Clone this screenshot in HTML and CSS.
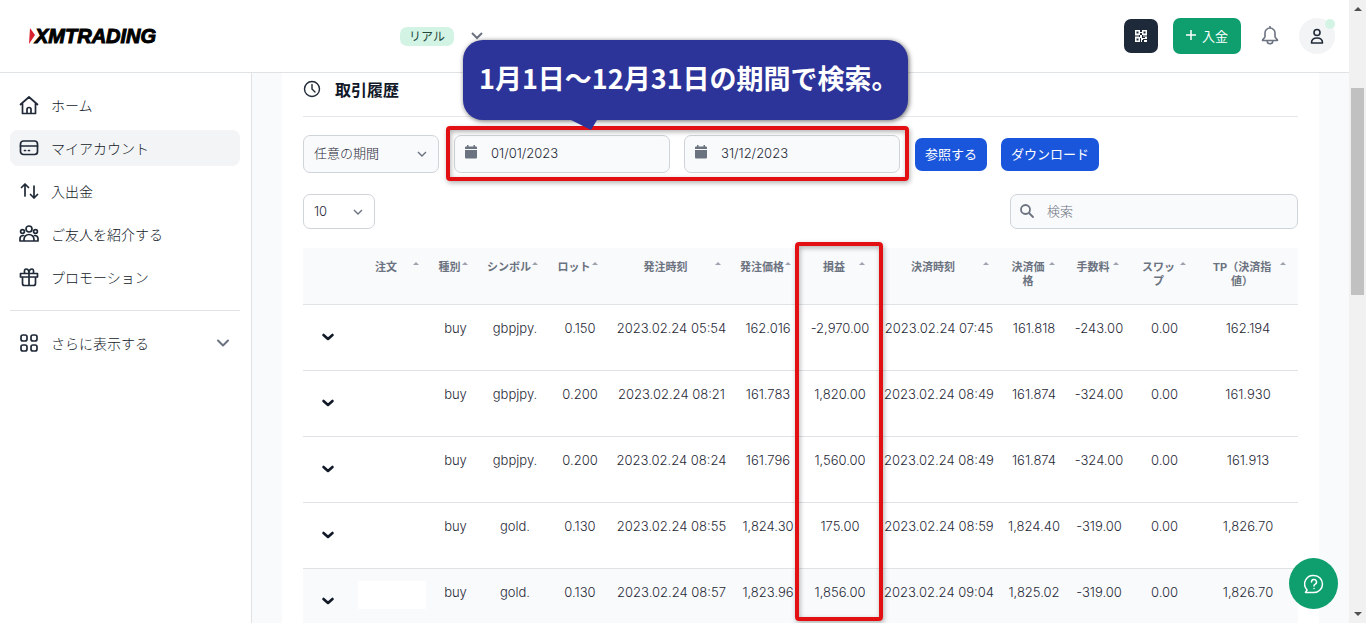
FILE: index.html
```
<!DOCTYPE html>
<html lang="ja">
<head>
<meta charset="utf-8">
<title>取引履歴</title>
<link rel="stylesheet" href="styles.css">
</head>
<body>
<div class="app">
  <header class="topbar">
    <a class="logo" href="#">
      <svg class="logo-mark" viewBox="0 0 6 16"><path d="M1 0 6 7 0 16Z"/></svg><span class="logo-text">XMTRADING</span>
    </a>
    <div class="account">
      <span class="badge">リアル</span>
      <button class="icon-button" aria-label="口座を選択"><svg class="icon-14" viewBox="0 0 14 14" fill="none" stroke="#6b7280" stroke-width="2"><path d="M2 4l5 5 5-5"/></svg></button>
    </div>
    <div class="actions">
      <button class="qr-button" aria-label="QRコード">
        <svg class="icon-14" viewBox="0 0 14 14" fill="#fff"><path fill-rule="evenodd" d="M1 1h5v5H1zM2.500 2.500v2h2v-2zM8 1h5v5H8zM9.500 2.500v2h2v-2zM1 8h5v5H1zM2.500 9.500v2h2v-2z"/><path d="M6 3h2v1H6zM6 6h2v3h3v1H9v1H8v2H7V9H6zM1 6.500h4v1H1zM9 6.500h4v1H9zM11 8h2v2h-2zM10 11h3v2h-3z"/></svg>
      </button>
      <button class="deposit-button"><svg class="icon-10" viewBox="0 0 10 10" stroke="#fff" stroke-width="1.500"><path d="M5 0v10M0 5h10"/></svg>入金</button>
      <button class="icon-button" aria-label="通知"><svg class="icon-20" viewBox="0 0 20 20" fill="none" stroke="#6b7280" stroke-width="1.600" stroke-linecap="round" stroke-linejoin="round"><path d="M10 .500v1.500M10 2a5 5 0 0 0-5 5v3.500c0 1.600-2.500 2.600-2.500 4h15c0-1.400-2.500-2.400-2.500-4V7a5 5 0 0 0-5-5ZM7.200 15a2.800 2.800 0 0 0 5.600 0"/></svg></button>
      <button class="avatar" aria-label="プロフィール"><svg class="icon-16" viewBox="0 0 16 16" fill="none" stroke="#1f2937" stroke-width="1.600" stroke-linejoin="round"><circle cx="8" cy="4.500" r="3"/><path d="M2.500 15c0-3.300 2.200-5 5.500-5s5.500 1.700 5.500 5Z"/></svg><span class="status-dot"></span></button>
    </div>
  </header>
  <div class="body">
    <nav class="sidebar">
      <a class="nav-item" href="#"><svg class="icon-20" viewBox="0 0 20 20"><path d="M1.500 9.500 10 2l8.500 7.500M3.500 8.500V18.500h13V8.500M8 18.500v-4a2 2 0 0 1 4 0v4"/></svg>ホーム</a>
      <a class="nav-item active" href="#"><svg class="icon-20" viewBox="0 0 20 20"><rect x="1.500" y="3" width="17" height="13.500" rx="3"/><path d="M1.500 8h17M5.500 12.500h1M9.500 12.500h1"/></svg>マイアカウント</a>
      <a class="nav-item" href="#"><svg class="icon-20" viewBox="0 0 20 20"><path d="M6 15V3M2.500 6.500 6 3l3.500 3.500M15 5v12M11.500 13.500 15 17l3.500-3.500"/></svg>入出金</a>
      <a class="nav-item" href="#"><svg class="icon-20" viewBox="0 0 20 20"><circle cx="10" cy="5" r="3"/><circle cx="3.500" cy="7.500" r="1.900"/><circle cx="16.500" cy="7.500" r="1.900"/><path d="M5 17v-1.500a5 5 0 0 1 10 0V17ZM5 17H1v-2.500c0-2 1.500-3 3.500-3M15 17h4v-2.500c0-2-1.500-3-3.500-3"/></svg>ご友人を紹介する</a>
      <a class="nav-item" href="#"><svg class="icon-20" viewBox="0 0 20 20"><path d="M1.500 6.500h17V10h-17ZM3.500 10v6.500a2 2 0 0 0 2 2h9a2 2 0 0 0 2-2V10M10 6.500v12M10 6.500H6.500C5 6.500 5 2 7 2s3 2 3 4.500ZM10 6.500h3.500c1.500 0 1.500-4.500-.500-4.500s-3 2-3 4.500Z"/></svg>プロモーション</a>
      <hr class="nav-divider">
      <button class="nav-item nav-more"><svg class="icon-20" viewBox="0 0 20 20"><rect x="2" y="2" width="6" height="6" rx="2"/><rect x="12" y="2" width="6" height="6" rx="2"/><rect x="2" y="12" width="6" height="6" rx="2"/><rect x="12" y="12" width="6" height="6" rx="2"/></svg><span class="nav-label">さらに表示する</span><svg class="icon-14 nav-chevron" viewBox="0 0 14 14"><path d="M2 4.500l5 5 5-5"/></svg></button>
    </nav>
    <main class="content">
      <section class="card">
        <h2 class="card-title"><svg class="icon-18" viewBox="0 0 18 18" fill="none" stroke="#1f2937" stroke-width="1.400" stroke-linecap="round"><circle cx="9" cy="9" r="7.500"/><path d="M9 4.500V9l3 3"/></svg>取引履歴</h2>
        <div class="filters">
          <div class="select-box period">
            <select class="field tinted" aria-label="期間"><option>任意の期間</option></select>
            <svg class="select-arrow" viewBox="0 0 12 12"><path d="M2 4l4 4 4-4"/></svg>
          </div>
          <div class="date-range">
            <div class="input-box">
              <svg class="input-icon" viewBox="0 0 14 14" fill="#6b7280"><path d="M3 0h1.500v1.500h5V0H11v1.500h1q1 0 1 1V4H1V2.500q0-1 1-1h1ZM1 5h12v7.500q0 1-1 1H2q-1 0-1-1Z"/></svg>
              <input class="field tinted with-icon" type="text" value="01/01/2023" aria-label="開始日">
            </div>
            <div class="input-box">
              <svg class="input-icon" viewBox="0 0 14 14" fill="#6b7280"><path d="M3 0h1.500v1.500h5V0H11v1.500h1q1 0 1 1V4H1V2.500q0-1 1-1h1ZM1 5h12v7.500q0 1-1 1H2q-1 0-1-1Z"/></svg>
              <input class="field tinted with-icon" type="text" value="31/12/2023" aria-label="終了日">
            </div>
            <div class="callout">1月1日～12月31日の期間で検索。<svg class="callout-tail" viewBox="0 0 26 10"><path d="M0 0h26l-6 10Z"/></svg></div>
          </div>
          <div class="filter-buttons">
            <button class="primary">参照する</button>
            <button class="primary">ダウンロード</button>
          </div>
        </div>
        <div class="table-tools">
          <div class="select-box page-size">
            <select class="field" aria-label="表示件数"><option>10</option></select>
            <svg class="select-arrow" viewBox="0 0 12 12"><path d="M2 4l4 4 4-4"/></svg>
          </div>
          <div class="input-box search">
            <svg class="input-icon" viewBox="0 0 14 14" fill="none" stroke="#6b7280" stroke-width="1.800" stroke-linecap="round"><circle cx="5.500" cy="5.500" r="4.500"/><path d="M9 9l4 4"/></svg>
            <input class="field tinted with-icon" type="search" placeholder="検索" aria-label="検索">
          </div>
        </div>
        <table class="history">
          <colgroup><col class="c-toggle"><col class="c-order"><col class="c-type"><col class="c-symbol"><col class="c-lot"><col class="c-open-time"><col class="c-open-price"><col class="c-profit"><col class="c-close-time"><col class="c-close-price"><col class="c-fee"><col class="c-swap"><col class="c-tp"></colgroup>
          <thead>
            <tr><th class="plain"></th><th>注文</th><th>種別</th><th>シンボル</th><th>ロット</th><th>発注時刻</th><th>発注価格</th><th><span class="highlight"></span>損益</th><th>決済時刻</th><th>決済価格</th><th>手数料</th><th>スワップ</th><th>TP（決済指値）</th></tr>
          </thead>
          <tbody>
            <tr><td class="toggle"><button class="icon-button" aria-label="詳細"><svg class="icon-14" viewBox="0 0 14 14"><path d="M2.500 5 7 9l4.500-4"/></svg></button></td><td></td><td>buy</td><td>gbpjpy.</td><td>0.150</td><td>2023.02.24 05:54</td><td>162.016</td><td>-2,970.00</td><td>2023.02.24 07:45</td><td>161.818</td><td>-243.00</td><td>0.00</td><td>162.194</td></tr>
            <tr><td class="toggle"><button class="icon-button" aria-label="詳細"><svg class="icon-14" viewBox="0 0 14 14"><path d="M2.500 5 7 9l4.500-4"/></svg></button></td><td></td><td>buy</td><td>gbpjpy.</td><td>0.200</td><td>2023.02.24 08:21</td><td>161.783</td><td>1,820.00</td><td>2023.02.24 08:49</td><td>161.874</td><td>-324.00</td><td>0.00</td><td>161.930</td></tr>
            <tr><td class="toggle"><button class="icon-button" aria-label="詳細"><svg class="icon-14" viewBox="0 0 14 14"><path d="M2.500 5 7 9l4.500-4"/></svg></button></td><td></td><td>buy</td><td>gbpjpy.</td><td>0.200</td><td>2023.02.24 08:24</td><td>161.796</td><td>1,560.00</td><td>2023.02.24 08:49</td><td>161.874</td><td>-324.00</td><td>0.00</td><td>161.913</td></tr>
            <tr><td class="toggle"><button class="icon-button" aria-label="詳細"><svg class="icon-14" viewBox="0 0 14 14"><path d="M2.500 5 7 9l4.500-4"/></svg></button></td><td></td><td>buy</td><td>gold.</td><td>0.130</td><td>2023.02.24 08:55</td><td>1,824.30</td><td>175.00</td><td>2023.02.24 08:59</td><td>1,824.40</td><td>-319.00</td><td>0.00</td><td>1,826.70</td></tr>
            <tr class="hovered"><td class="toggle"><button class="icon-button" aria-label="詳細"><svg class="icon-14" viewBox="0 0 14 14"><path d="M2.500 5 7 9l4.500-4"/></svg></button></td><td class="masked"><div class="mask"></div></td><td>buy</td><td>gold.</td><td>0.130</td><td>2023.02.24 08:57</td><td>1,823.96</td><td>1,856.00</td><td>2023.02.24 09:04</td><td>1,825.02</td><td>-319.00</td><td>0.00</td><td>1,826.70</td></tr>
          </tbody>
        </table>
      </section>
    </main>
  </div>
  <button class="help" aria-label="ヘルプ"><svg class="icon-20" viewBox="0 0 20 20" fill="none" stroke="#fff" stroke-width="1.500" stroke-linecap="round" stroke-linejoin="round"><path d="M10 1.500a8.500 8.500 0 1 1 0 17H1.500l1.600-2.600A8.500 8.500 0 0 1 10 1.500Z"/><path d="M7.500 8a2.500 2.500 0 1 1 3.700 2.200c-.800.400-1.200.900-1.200 1.800M10 14.500v.100"/></svg></button>
</div>
<div class="scrollbar">
  <svg class="scroll-arrow" viewBox="0 0 8 4"><path d="M0 4 4 0l4 4Z"/></svg>
  <div class="scroll-track"><div class="scroll-thumb"></div></div>
  <svg class="scroll-arrow" viewBox="0 0 8 4"><path d="M0 0h8L4 4Z"/></svg>
</div>
</body>
</html>
```
FILE: styles.css
```
* {
  box-sizing: border-box;
}

body {
  margin: 0;
  height: 100vh;
  display: flex;
  overflow: hidden;
  background: #fff;
  color: #1f2937;
  font-family: Inter, "Noto Sans CJK JP", sans-serif;
  font-size: 13px;
  font-weight: 300;
}

button,
input,
select {
  font: inherit;
  color: inherit;
}

button {
  border: 0;
  padding: 0;
  background: none;
  cursor: pointer;
}

svg {
  display: block;
  flex: none;
}

.icon-10 { width: 10px; height: 10px; }
.icon-14 { width: 14px; height: 14px; }
.icon-16 { width: 16px; height: 16px; }
.icon-18 { width: 18px; height: 18px; }
.icon-20 { width: 20px; height: 20px; }

.app {
  position: relative;
  flex: 1;
  min-width: 0;
  display: flex;
  flex-direction: column;
}

/* Top bar */
.topbar {
  flex: none;
  display: flex;
  align-items: center;
  height: 73px;
  padding: 0 14px 0 29px;
  border-bottom: 1px solid #e0e3e6;
}

.logo {
  display: flex;
  align-items: center;
  width: 371px;
  color: #000;
  text-decoration: none;
}

.logo-mark {
  width: 6px;
  height: 16px;
  fill: #d8232f;
}

.logo-text {
  font: italic bold 20px/24px "Liberation Sans", Arial, sans-serif;
  -webkit-text-stroke: 1px #000;
}

.account {
  display: flex;
  align-items: center;
  gap: 16px;
}

.badge {
  padding: 0 9px;
  border-radius: 7px;
  background: #d3f4e5;
  font-size: 12px;
  font-weight: 400;
  line-height: 19px;
  color: #24483c;
}

.actions {
  display: flex;
  align-items: center;
  gap: 19px;
  margin-left: auto;
}

.qr-button,
.deposit-button {
  display: flex;
  align-items: center;
  justify-content: center;
  border-radius: 7px;
}

.qr-button {
  width: 34px;
  height: 34px;
  margin-right: -4px;
  background: #1e2939;
}

.deposit-button {
  gap: 6px;
  width: 68px;
  height: 36px;
  padding-bottom: 2px;
  background: #0f9f6e;
  font-weight: 400;
  color: #fff;
}

.avatar {
  position: relative;
  display: flex;
  align-items: center;
  justify-content: center;
  width: 36px;
  height: 36px;
  border-radius: 50%;
  background: #f3f4f6;
}

.status-dot {
  position: absolute;
  top: 1px;
  right: 0;
  width: 10px;
  height: 10px;
  border-radius: 50%;
  background: #d3f4e5;
}

/* Sidebar */
.body {
  flex: 1;
  min-height: 0;
  display: flex;
}

.sidebar {
  flex: none;
  display: flex;
  flex-direction: column;
  gap: 7px;
  width: 252px;
  padding: 14px 11px 0 10px;
  border-right: 1px solid #e0e3e6;
}

.nav-item {
  display: flex;
  align-items: center;
  gap: 12px;
  height: 36px;
  padding: 0 10px 0 9px;
  border-radius: 8px;
  font-size: 14px;
  color: #111827;
  text-decoration: none;
}

.nav-item svg {
  fill: none;
  stroke: #1f2937;
  stroke-width: 1.7;
  stroke-linecap: round;
  stroke-linejoin: round;
}

.nav-item.active {
  background: #f3f4f6;
}

.nav-divider {
  width: 100%;
  margin: 8px 0 7px;
  border: 0;
  border-top: 1px solid #e0e3e6;
}

.nav-label {
  flex: 1;
  text-align: left;
}

.nav-item .nav-chevron {
  stroke: #6b7280;
  stroke-width: 2;
}

/* Card */
.content {
  flex: 1;
  min-width: 0;
  padding: 0 30px;
  background: #f9fafb;
}

.card {
  height: 100%;
  padding: 0 21px;
  background: #fff;
}

.card-title {
  display: flex;
  align-items: center;
  gap: 14px;
  height: 44px;
  margin: 0 0 18px;
  padding-bottom: 12px;
  border-bottom: 1px solid #e5e7eb;
  font-size: 16px;
  font-weight: 700;
  color: #111827;
}

.filters {
  display: flex;
  align-items: center;
  gap: 15px;
}

.date-range {
  position: relative;
  display: flex;
  gap: 14px;
}

.date-range .input-box {
  width: 216px;
}

.date-range::after {
  content: "";
  position: absolute;
  inset: -9px -9px -8px -8px;
}

.date-range::after,
.highlight {
  border: 4px solid #e20f13;
  border-radius: 4px;
  box-shadow: 1px 2px 5px rgba(0, 0, 0, 0.3), inset 1px 2px 5px rgba(0, 0, 0, 0.3);
  pointer-events: none;
}

.filter-buttons {
  display: flex;
  gap: 14px;
}

.primary {
  height: 33px;
  padding: 0 10px 2px;
  border-radius: 7px;
  background: #1a56db;
  font-weight: 400;
  color: #fff;
}

.select-box,
.input-box {
  position: relative;
}

.period {
  width: 136px;
}

.page-size {
  width: 72px;
}

.field {
  display: block;
  width: 100%;
  height: 38px;
  margin: 0;
  padding: 0 10px 2px;
  border: 1px solid #cfd4da;
  border-radius: 7px;
  outline: 0;
  background: #fff;
  appearance: none;
}

.tinted {
  background: #f9fafb;
}

.with-icon {
  padding-left: 36px;
}

.field::placeholder {
  color: #6b7280;
  opacity: 1;
}

.input-icon {
  position: absolute;
  top: 10px;
  left: 10px;
  width: 14px;
  height: 14px;
}

.select-arrow {
  position: absolute;
  top: 50%;
  right: 11px;
  width: 12px;
  height: 12px;
  margin-top: -6px;
  fill: none;
  stroke: #6b7280;
  stroke-width: 1.4;
  pointer-events: none;
}

.callout {
  position: absolute;
  z-index: 2;
  bottom: 53px;
  left: 9px;
  padding: 0 9px 4px 16px;
  border-radius: 20px;
  background: #2d3499;
  box-shadow: 1px 1px 5px rgba(0, 0, 0, 0.6);
  font-family: "Noto Sans CJK JP", sans-serif;
  font-size: 27px;
  font-weight: 700;
  line-height: 76px;
  color: #fff;
  white-space: nowrap;
}

.callout-tail {
  position: absolute;
  top: 100%;
  left: 108px;
  width: 26px;
  height: 10px;
  fill: #2d3499;
}

.table-tools {
  display: flex;
  justify-content: space-between;
  margin: 21px 0 19px;
}

.table-tools .field {
  height: 35px;
}

.search {
  width: 288px;
}

/* Table */
.history {
  width: 100%;
  table-layout: fixed;
  border-collapse: collapse;
  text-align: center;
}

.c-toggle { width: 50px; }
.c-order { width: 78px; }
.c-type { width: 49px; }
.c-symbol { width: 70px; }
.c-lot { width: 60px; }
.c-open-time { width: 123px; }
.c-open-price { width: 70px; }
.c-profit { width: 74px; }
.c-close-time { width: 124px; }
.c-close-price { width: 66px; }
.c-fee { width: 64px; }
.c-swap { width: 67px; }
.c-tp { width: 100px; }

.history th {
  position: relative;
  height: 56px;
  padding: 12px 18px 0 6px;
  background: #f9fafb;
  vertical-align: top;
  font-size: 11px;
  font-weight: 700;
  line-height: 14px;
  color: #6b7280;
}

.history th:nth-child(-n+9) {
  white-space: nowrap;
}

.history th:nth-child(-n+8) {
  padding: 12px 12px 0 0;
}

.history th:last-child {
  padding: 12px 24px 0 12px;
}

.history th:not(.plain)::after {
  content: "";
  position: absolute;
  top: 14px;
  right: 12px;
  border: 3px solid transparent;
  border-top: 0;
  border-bottom-color: #9ca3af;
}

.highlight {
  position: absolute;
  z-index: 1;
  top: -6px;
  left: -8px;
  right: -6px;
  height: 379px;
}

.history td {
  height: 66px;
  padding: 14px 0 0;
  border-top: 1px solid #e0e3e6;
  vertical-align: top;
  line-height: 18px;
  white-space: nowrap;
}

.history .toggle {
  padding: 3px 0 0;
  vertical-align: middle;
}

.toggle svg {
  fill: none;
  stroke: #111827;
  stroke-width: 2.6;
  stroke-linecap: round;
  stroke-linejoin: round;
}

.hovered {
  background: #f9fafb;
}

.history .masked {
  padding: 12px 5px 0;
}

.mask {
  height: 28px;
  background: #fff;
}

.help {
  position: absolute;
  z-index: 3;
  right: 11px;
  bottom: 14px;
  display: flex;
  align-items: center;
  justify-content: center;
  width: 49px;
  height: 51px;
  border-radius: 50%;
  background: #0f9f6e;
}

/* Scroll bar */
.scrollbar {
  flex: none;
  display: flex;
  flex-direction: column;
  align-items: center;
  width: 17px;
  padding: 7px 0;
  background: #f1f1f1;
}

.scroll-arrow {
  width: 8px;
  height: 4px;
  fill: #505050;
}

.scroll-track {
  flex: 1;
  padding-top: 77px;
}

.scroll-thumb {
  width: 13px;
  height: 207px;
  background: #c1c1c1;
}
```
